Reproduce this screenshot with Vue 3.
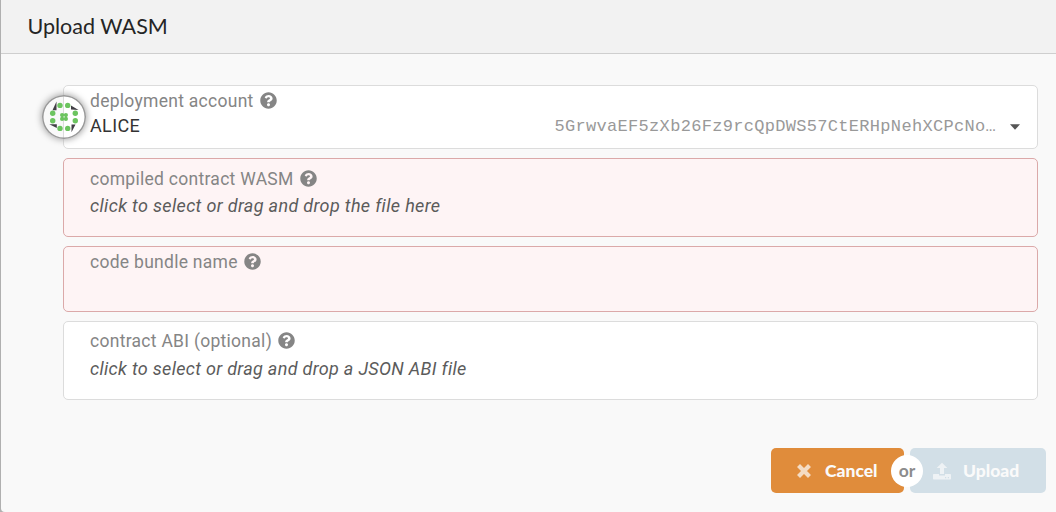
<script setup>
const address = '5GrwvaEF5zXb26Fz9rcQpDWS57CtERHpNehXCPcNo…'
const dots = [
  [60, 105.4], [67.7, 105.4], [52.7, 113.3], [52.7, 120.7],
  [60, 128.4], [67.7, 128.4], [75.3, 113.3], [75.3, 120.7],
]
const core = [[62.1, 115.1], [65.9, 115.1], [62.1, 118.9], [65.9, 118.9]]
const fields = [
  { key: 'account', label: 'deployment account' },
  { key: 'wasm', label: 'compiled contract WASM', hint: 'click to select or drag and drop the file here', error: true },
  { key: 'name', label: 'code bundle name', error: true },
  { key: 'abi', label: 'contract ABI (optional)', hint: 'click to select or drag and drop a JSON ABI file' },
]
</script>

<template>
  <div class="modal">
    <header class="header">Upload WASM</header>
    <main class="content">
      <section v-for="f in fields" :key="f.key" class="field" :class="[f.key, { error: f.error }]">
        <label class="label">
          <span class="label-text">{{ f.label }}</span>
          <svg class="help" viewBox="0 0 512 512"><path fill="currentColor" d="M504 256c0 137-111 248-248 248S8 393 8 256 119 8 256 8s248 111 248 248zM262.700 90c-54.500 0-89.300 23-116.500 63.800-3.500 5.300-2.400 12.400 2.700 16.300l34.700 26.300c5.200 3.900 12.600 3 16.700-2.100 17.900-22.700 30.100-35.800 57.300-35.800 20.400 0 45.700 13.100 45.700 33 0 15-12.400 22.700-32.500 34C247.100 238.500 216 254.900 216 296v4c0 6.600 5.400 12 12 12h56c6.600 0 12-5.400 12-12v-1.300c0-28.500 83.200-29.600 83.200-106.700 0-58-60.200-102-116.500-102zM256 338c-25.400 0-46 20.600-46 46s20.600 46 46 46 46-20.600 46-46-20.600-46-46-46z" /></svg>
        </label>
        <div v-if="f.hint" class="hint">{{ f.hint }}</div>
        <template v-if="f.key === 'account'">
          <div class="account-row">
            <span class="name">ALICE</span>
            <span class="address">{{ address }}</span>
            <svg class="caret" width="10" height="6" viewBox="0 0 10 6"><path fill="#555" d="M0 .3h10L5 5.800z" /></svg>
          </div>
          <svg class="avatar" viewBox="42 95 44 44">
            <g fill="#403f44">
              <path d="M52.500 110.200h4v-8.700z" />
              <path d="M71 105.500v4l7.500.5z" />
              <path d="M71.500 124.500h4l-4 7.800z" />
              <path d="M49.300 124.300h7.500v3.800z" />
            </g>
            <g fill="#6cc45f">
              <circle v-for="(d, i) in dots" :key="i" :cx="d[0]" :cy="d[1]" r="2.700" />
              <circle v-for="(d, i) in core" :key="'c' + i" :cx="d[0]" :cy="d[1]" r="2.100" />
            </g>
          </svg>
        </template>
      </section>
    </main>
    <footer class="actions">
      <button class="btn cancel">
        <svg class="icon" width="14" height="14" viewBox="0 0 14 14"><path d="M3 3l8 8M11 3l-8 8" stroke="currentColor" stroke-width="4.200" stroke-linecap="square" /></svg>
        <span>Cancel</span>
      </button>
      <div class="or">or</div>
      <button class="btn upload">
        <svg class="icon" width="18" height="18" viewBox="0 0 18 18"><path fill="currentColor" fill-rule="evenodd" d="M7 12V6H3.700L9 .700 14.300 6H11v6zM.800 12H6v1.400h6V12h5.200q.800 0 .800.800v3.900q0 .800-.800.800H.800q-.800 0-.800-.800v-3.900q0-.800.800-.800zM12 15v1.200h1.200V15zM14.800 15v1.200H16V15z" /></svg>
        <span>Upload</span>
      </button>
    </footer>
  </div>
</template>

<style>
body { background: #b0b0b0; overflow: hidden; }
</style>

<style scoped>
.modal {
  box-sizing: border-box;
  height: 512px;
  margin-left: 1px;
  background: #f9f9f9;
  border-bottom-left-radius: 4px;
  font-family: Roboto, "Liberation Sans", sans-serif;
  display: flex;
  flex-direction: column;
}
.header {
  box-sizing: border-box;
  height: 54px;
  padding-left: 26.500px;
  background: #f2f2f2;
  border-bottom: 1px solid #cfcfcf;
  color: #252525;
  font: 400 21.500px/53px Lato, sans-serif;
}
.content {
  padding: 31px 18px 0 62px;
  display: flex;
  flex-direction: column;
  gap: 9px;
}
.field {
  box-sizing: border-box;
  position: relative;
  padding-left: 26px;
  background: #fff;
  border: 1px solid #dcdcdc;
  border-radius: 5px;
}
.account { height: 64px; padding-top: 4px; }
.wasm { height: 79px; padding-top: 9px; }
.name.field { height: 66px; padding-top: 4px; }
.abi { height: 79px; padding-top: 8px; }
.error { background: #fef4f5; border-color: #dba9a9; }
.label {
  display: flex;
  align-items: center;
  height: 20px;
  color: #858585;
  font-size: 17.500px;
  letter-spacing: .28px;
}
.label-text { padding-top: 2px; }
.help { width: 17px; height: 17px; margin-left: 6px; }
.hint {
  height: 22px;
  margin-top: 7px;
  color: #5b5b5b;
  font-size: 18px;
  font-style: italic;
  line-height: 22px;
  letter-spacing: .34px;
}
.abi .hint { margin-top: 8px; letter-spacing: .31px; }
.account-row {
  display: flex;
  align-items: center;
  height: 24px;
  margin-top: 3px;
  padding-right: 17px;
}
.account-row .name { color: #333; font-size: 18px; letter-spacing: .35px; }
.address {
  margin: 4px 0 0 auto;
  color: #999;
  font: 17px/20px "Liberation Mono", monospace;
  letter-spacing: .31px;
}
.caret { margin: 4px 0 0 14px; }
.avatar {
  position: absolute;
  left: -22px;
  top: 9px;
  width: 44px;
  height: 44px;
  border-radius: 50%;
  box-shadow: inset 0 0 0 1.500px #999, 0 0 6px 1px #aaa;
}
.actions {
  display: flex;
  align-items: center;
  justify-content: flex-end;
  margin-top: 48px;
  padding-right: 10px;
}
.btn {
  box-sizing: border-box;
  display: flex;
  align-items: center;
  height: 45px;
  border: 0;
  border-radius: 5px;
  color: #fafafa;
  font: 900 17.500px/20px Lato, sans-serif;
}
.cancel { width: 133px; padding: 0 0 0 26px; background: #e08c3b; }
.cancel .icon { margin-right: 14px; color: #f4dcc4; }
.upload { width: 136px; padding: 0 0 0 23px; background: #d2dfe7; }
.upload .icon { margin-right: 12px; color: #eef2f5; }
.or {
  z-index: 1;
  width: 32px;
  height: 32px;
  margin: 0 -13px;
  border-radius: 50%;
  background: #fff;
  color: #8c8c8c;
  font: 700 17.500px/32px Lato, sans-serif;
  text-align: center;
}
</style>
